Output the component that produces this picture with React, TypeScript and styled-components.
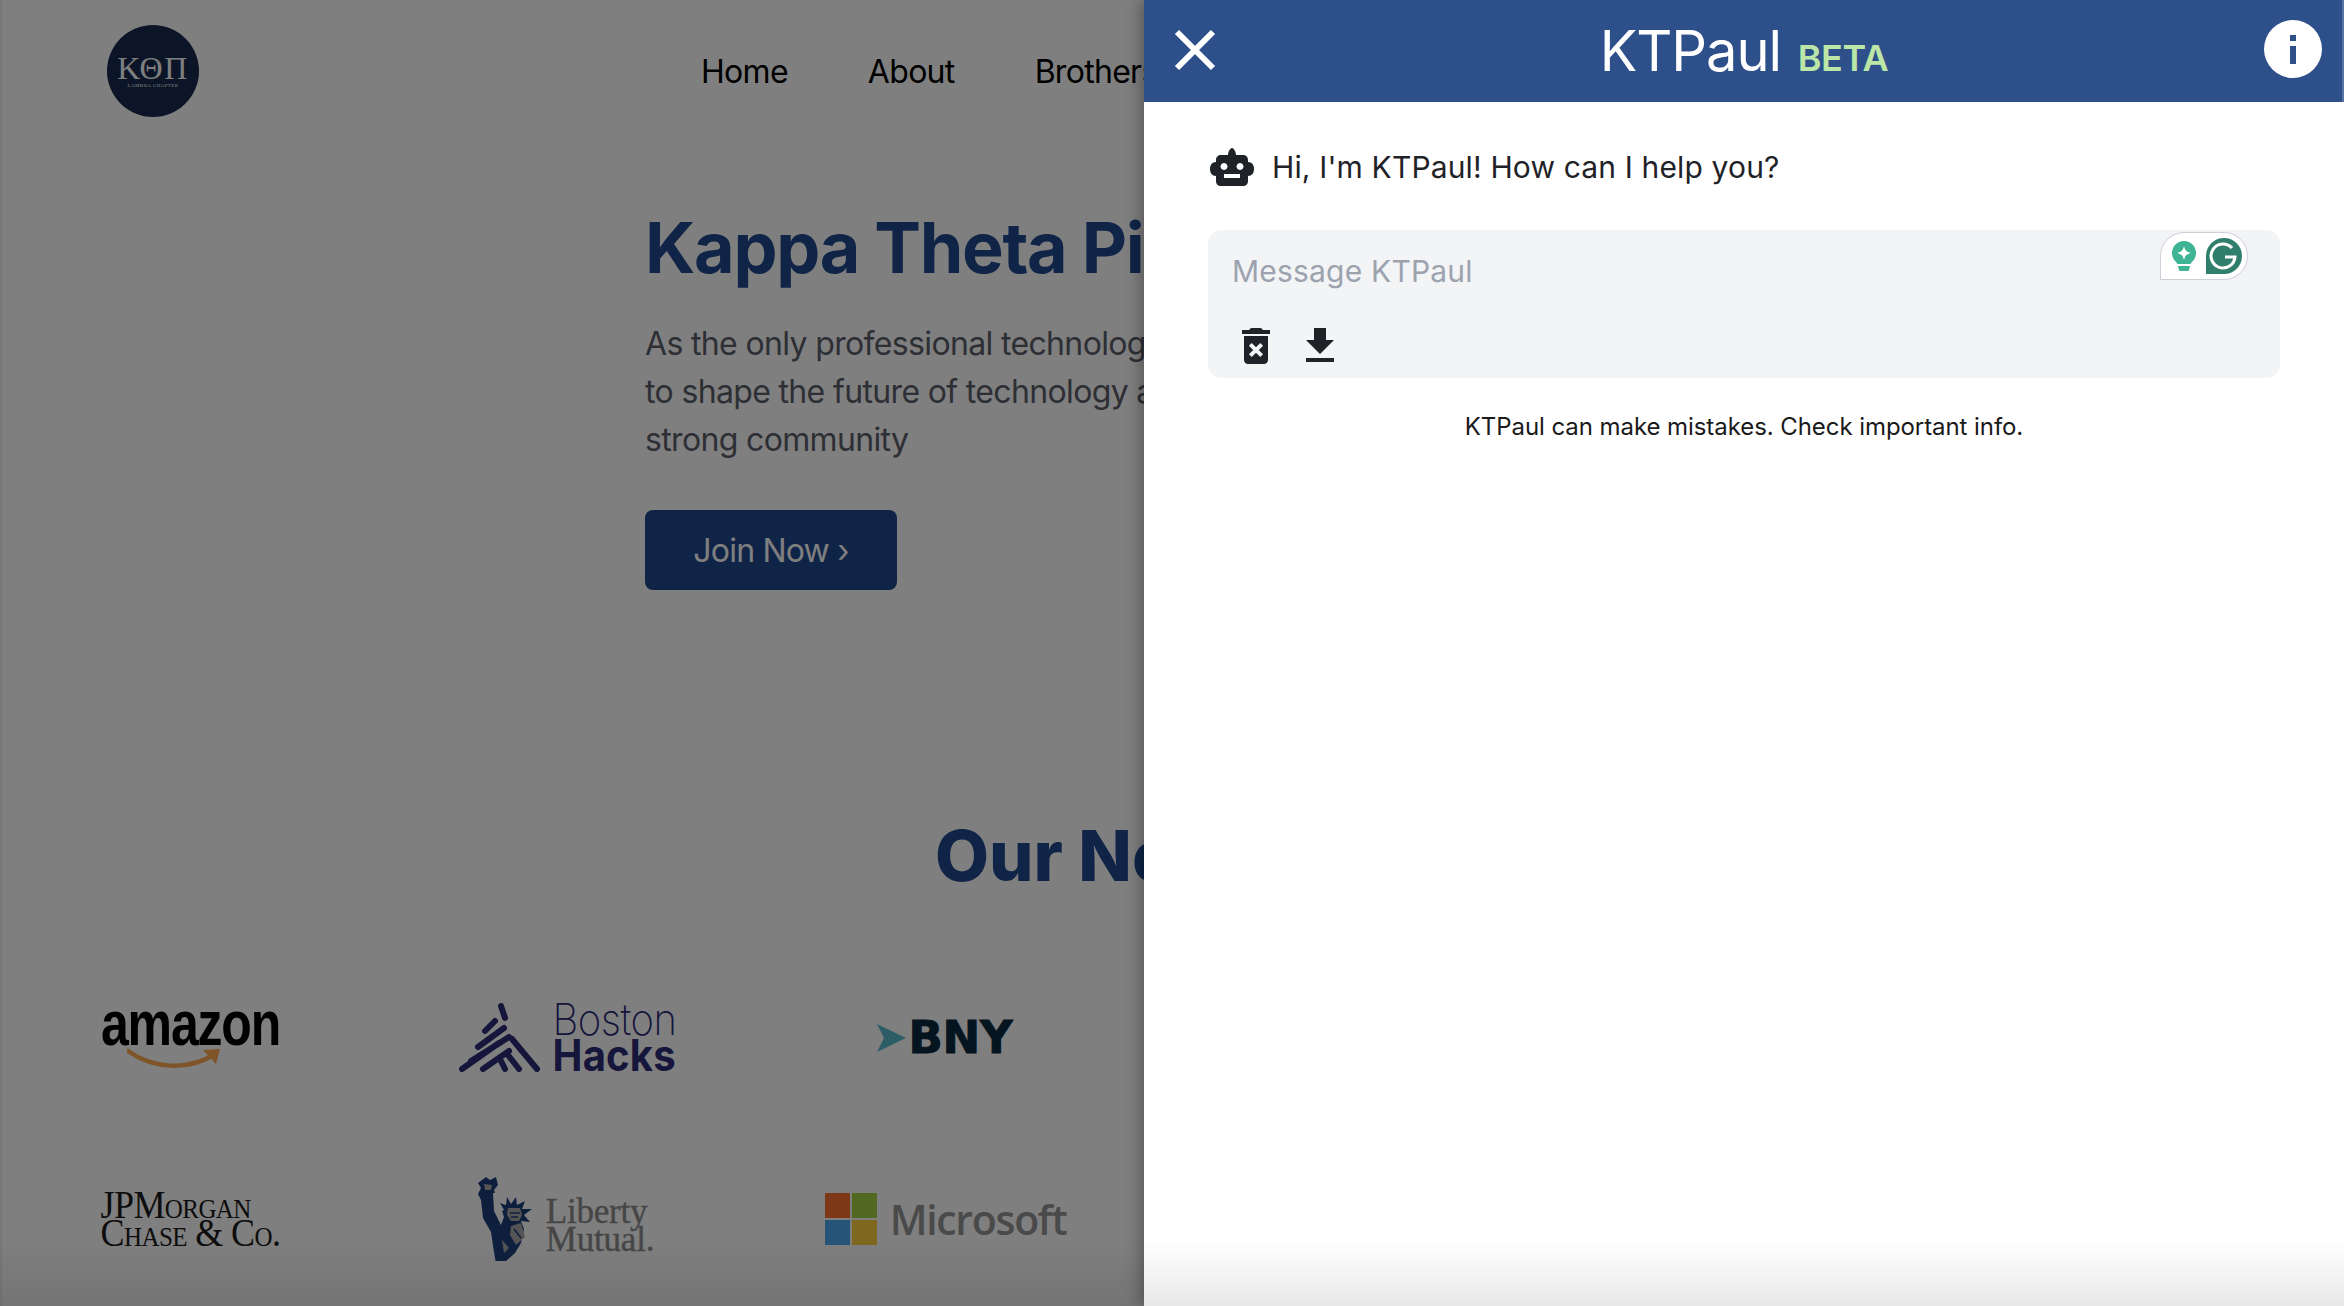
import React from "react";
import styled, { createGlobalStyle } from "styled-components";
import { MdDeleteForever, MdFileDownload } from "react-icons/md";

const Global = createGlobalStyle`
  html, body { margin: 0; padding: 0; height: 100%; overflow: hidden; background: #fff; }
  body { font-family: Inter, "Liberation Sans", sans-serif; }
  * { box-sizing: border-box; }
`;

const Screen = styled.div`
  position: relative;
  width: 2344px;
  height: 1306px;
  overflow: hidden;
  background: #fff;
`;

/* ---------- page behind the drawer ---------- */
const Page = styled.main`
  width: 2344px;
  height: 1306px;
  white-space: nowrap;
  border-left: 2px solid #f0f0f0;
`;

const Nav = styled.nav`
  display: flex;
  align-items: center;
  height: 142px;
  padding-left: 105px;
  gap: 80px;
`;

const Badge = styled.div`
  width: 92px;
  height: 92px;
  margin-right: 422px;
  border-radius: 50%;
  background: #172b4e;
  color: #fff;
  display: flex;
  flex-direction: column;
  align-items: center;
  justify-content: center;
  font-family: "Liberation Serif", serif;
`;

const BadgeLetters = styled.div`
  font-size: 32px;
  line-height: 28px;
  letter-spacing: 1.5px;
`;

const BadgeSub = styled.div`
  font-size: 5px;
  line-height: 7px;
  letter-spacing: 0.4px;
`;

const NavLink = styled.a`
  font-size: 32px;
  letter-spacing: -0.7px;
  color: #000;
`;

const Hero = styled.section`
  padding: 62px 0 0 643px;
`;

const HeroTitle = styled.h1`
  margin: 0;
  font-size: 70px;
  line-height: 88px;
  font-weight: 700;
  letter-spacing: -1.3px;
  color: #1f498f;
`;

const HeroText = styled.p`
  margin: 28px 0 0;
  font-size: 32px;
  line-height: 48px;
  letter-spacing: -0.65px;
  color: #5b5e6b;
`;

const JoinButton = styled.button`
  display: block;
  margin-top: 46px;
  width: 252px;
  height: 80px;
  border: 0;
  border-radius: 8px;
  background: #1f498f;
  color: #fff;
  font: 400 32px Inter, sans-serif;
  letter-spacing: -0.8px;
`;

const NetworkTitle = styled.h2`
  margin: 222px 0 0 933px;
  font-size: 70px;
  line-height: 88px;
  font-weight: 800;
  color: #1f498f;
`;

const LogoGrid = styled.div`
  display: grid;
  grid-template-columns: repeat(3, 377px);
  grid-auto-rows: 181px;
  margin: 47px 0 0 0;
`;

const LogoCell = styled.div`
  display: flex;
  align-items: center;
  justify-content: center;
`;

const LogoStack = styled.div`
  display: flex;
  flex-direction: column;
  align-items: flex-start;
`;

const AmazonWord = styled.div`
  font: 700 50px/40px "Liberation Sans", sans-serif;
  letter-spacing: -1.2px;
  color: #000;
  transform: scaleY(1.25);
`;

const Swoosh = styled.svg`
  display: block;
  margin: 3px 0 0 26px;
`;

const BostonRow = styled.div`
  display: flex;
  align-items: center;
  gap: 12px;
`;

const BostonWord = styled.div<{ $bold?: boolean }>`
  font-family: Inter, sans-serif;
  font-size: 40px;
  line-height: 36px;
  font-weight: ${(p) => (p.$bold ? 700 : 200)};
  letter-spacing: ${(p) => (p.$bold ? "0.2px" : "-0.5px")};
  color: #2c2c78;
  transform: scaleY(1.08);
`;

const BnyRow = styled.div`
  display: flex;
  align-items: center;
  gap: 2px;
`;

const BnyWord = styled.div`
  font: 700 45px/42px "DejaVu Sans", sans-serif;
  letter-spacing: -0.2px;
  -webkit-text-stroke: 1px #0a2a40;
  color: #0a2a40;
`;

const ChaseWord = styled.div`
  font: 400 36px/28px "Liberation Serif", serif;
  font-variant: small-caps;
  letter-spacing: -0.6px;
  color: #1b1b1b;
  transform: scaleY(1.12);
`;

const LibertyRow = styled.div`
  display: flex;
  align-items: flex-end;
  gap: 4px;
  margin-left: -3px;
`;

const LibertyWord = styled.div`
  font: 400 35px/28px "Liberation Serif", serif;
  -webkit-text-stroke: 0.4px #8c8c8c;
  letter-spacing: -0.2px;
  color: #8c8c8c;
`;

const LibertyText = styled(LogoStack)`
  padding-bottom: 7px;
`;

const MicrosoftRow = styled.div`
  display: flex;
  align-items: center;
  gap: 13px;
  margin-left: 2px;
`;

const MsWord = styled.div`
  font: 600 41px/52px "Open Sans", sans-serif;
  letter-spacing: -1.3px;
  color: #949494;
`;

const Scrim = styled.div`
  position: absolute;
  inset: 0;
  background: rgba(0, 0, 0, 0.5);
`;

/* ---------- chat drawer ---------- */
const Drawer = styled.aside`
  position: absolute;
  top: 0;
  right: 0;
  bottom: 0;
  width: 1200px;
  background: #fff;
  box-shadow: -4px 0 14px rgba(0, 0, 0, 0.3);
`;

const Header = styled.header`
  display: grid;
  grid-template-columns: 1fr auto 1fr;
  align-items: center;
  height: 102px;
  padding: 0 20px 0 30px;
  background: #2d4f8a;
  border-right: 2px solid #5873a3;
`;

const CloseButton = styled.button`
  justify-self: start;
  padding: 0;
  border: 0;
  background: none;
  display: flex;
  margin-top: -2px;
`;

const TitleGroup = styled.div`
  display: flex;
  align-items: baseline;
  gap: 17px;
  margin-right: 8px;
`;

const Title = styled.span`
  font-size: 56px;
  letter-spacing: -1.1px;
  color: #fff;
`;

const Beta = styled.span`
  font-size: 36px;
  font-weight: 600;
  letter-spacing: -0.5px;
  color: #bbe6a8;
`;

const InfoButton = styled.div`
  justify-self: end;
  width: 58px;
  height: 58px;
  border-radius: 50%;
  background: #fff;
  color: #2d4f8a;
  display: flex;
  flex-direction: column;
  align-items: center;
  justify-content: center;
  gap: 5px;
  margin-top: -4px;
`;

const InfoDot = styled.span`
  width: 6px;
  height: 6px;
  background: currentColor;
`;

const InfoStem = styled.span`
  width: 6px;
  height: 18px;
  background: currentColor;
`;

const Body = styled.div`
  padding: 45px 64px 0;
`;

const Greeting = styled.div`
  display: flex;
  align-items: center;
  gap: 18px;
  height: 40px;
  padding-left: 2px;
  font-size: 30px;
  letter-spacing: 0.15px;
  color: #1f2328;
`;

const InputBox = styled.div`
  position: relative;
  margin-top: 43px;
  height: 148px;
  padding: 21px 24px 8px;
  border-radius: 14px;
  background: #f3f4f6;
  display: flex;
  flex-direction: column;
  justify-content: space-between;
`;

const MessageInput = styled.input`
  display: block;
  width: 100%;
  height: 40px;
  padding: 0;
  border: 0;
  outline: 0;
  background: none;
  font: 400 30px Inter, sans-serif;
  letter-spacing: 0.2px;
  &::placeholder { color: #9ca3af; opacity: 1; }
`;

const Tools = styled.div`
  display: flex;
  gap: 16px;
  color: #1f2328;
  font-size: 48px;
  line-height: 0;
`;

const Grammarly = styled.div`
  position: absolute;
  top: 2px;
  right: 32px;
  width: 88px;
  height: 48px;
  display: flex;
  align-items: center;
  justify-content: space-between;
  padding: 0 5px 0 11px;
  background: #fff;
  border: 1.5px solid #ccd0d8;
  border-radius: 24px 24px 24px 0;
`;

const Disclaimer = styled.p`
  margin: 34px 0 0;
  text-align: center;
  font-size: 24px;
  line-height: 30px;
  letter-spacing: -0.07px;
  color: #1a1a1a;
`;

const BottomFade = styled.div`
  position: absolute;
  left: 0;
  right: 0;
  bottom: 0;
  height: 66px;
  background: linear-gradient(to bottom, rgba(0, 0, 0, 0), rgba(0, 0, 0, 0.09));
`;

const App = () => (
  <Screen>
    <Global />
    <Page>
      <Nav>
        <Badge>
          <BadgeLetters>ΚΘΠ</BadgeLetters>
          <BadgeSub>LAMBDA CHAPTER</BadgeSub>
        </Badge>
        <NavLink>Home</NavLink>
        <NavLink>About</NavLink>
        <NavLink>Brothers</NavLink>
      </Nav>
      <Hero>
        <HeroTitle>Kappa Theta Pi</HeroTitle>
        <HeroText>
          As the only professional technology
          <br />
          to shape the future of technology and
          <br />
          strong community
        </HeroText>
        <JoinButton>Join Now ›</JoinButton>
      </Hero>
      <NetworkTitle>Our Network</NetworkTitle>
      <LogoGrid>
        <LogoCell>
          <LogoStack>
            <AmazonWord>amazon</AmazonWord>
            <Swoosh width="96" height="24" viewBox="0 0 96 24">
              <path d="M1 4C26 22 62 24 88 7" fill="none" stroke="#ffa850" strokeWidth="4.500" strokeLinecap="round" />
              <path d="M76 3l17-1-4 15z" fill="#ffa850" />
            </Swoosh>
          </LogoStack>
        </LogoCell>
        <LogoCell>
          <BostonRow>
            <svg width="82" height="69" viewBox="0 0 82 69" fill="none" stroke="#2c2c78" strokeWidth="6" strokeLinecap="round">
              <path d="M42 3l4 12M36 18L26 28M45 25L19 44M50 34L12 58M3 66L40 40M24 66L50 48M53 36l25 30M49 52l11 14M42 58l4 8" />
            </svg>
            <LogoStack>
              <BostonWord>Boston</BostonWord>
              <BostonWord $bold>Hacks</BostonWord>
            </LogoStack>
          </BostonRow>
        </LogoCell>
        <LogoCell>
          <BnyRow>
            <svg width="30" height="30" viewBox="0 0 30 30">
              <path d="M0 1l29 14L0 29l7-14z" fill="#5bbcd0" />
            </svg>
            <BnyWord>BNY</BnyWord>
          </BnyRow>
        </LogoCell>
        <LogoCell>
          <LogoStack>
            <ChaseWord>JPMorgan</ChaseWord>
            <ChaseWord>Chase &amp; Co.</ChaseWord>
          </LogoStack>
        </LogoCell>
        <LogoCell>
          <LibertyRow>
            <svg width="64" height="85" viewBox="0 0 64 85">
              <path fill="#1d3f7d" d="M8 1l4 3 6-3 2 8-4 5 1 3h-2l1 18 7 14 3-8-2-6 2-1-4-7 6 2 1-8 4 7 5-7 1 8 8-4-3 8h10l-8 6 6 7-9-1 3 8-3 14-6 10-10 9-8 8-3-18-3-20-8-14-2-18-3-6 3-6-3-5z" />
              <path fill="#a9a9a9" d="M30 32h12l2 7-3 6h-8l-4-6zM33 50l10-3 4 14-9 8-6-10zM6 8l8 1-1 5H7zM24 64l7 8-5 5z" />
              <path fill="none" stroke="#1d3f7d" strokeWidth="1.500" d="M32 37h10M33 41h7M36 53l7 9" />
            </svg>
            <LibertyText>
              <LibertyWord>Liberty</LibertyWord>
              <LibertyWord>Mutual.</LibertyWord>
            </LibertyText>
          </LibertyRow>
        </LogoCell>
        <LogoCell>
          <MicrosoftRow>
            <svg width="52" height="52" viewBox="0 0 52 52">
              <rect width="25" height="25" fill="#f8702f" />
              <rect x="27" width="25" height="25" fill="#a0d040" />
              <rect y="27" width="25" height="25" fill="#4aa8f0" />
              <rect x="27" y="27" width="25" height="25" fill="#ffcf40" />
            </svg>
            <MsWord>Microsoft</MsWord>
          </MicrosoftRow>
        </LogoCell>
      </LogoGrid>
    </Page>
    <Scrim />
    <Drawer>
      <Header>
        <CloseButton aria-label="Close">
          <svg width="42" height="42" viewBox="0 0 42 42" stroke="#fff" strokeWidth="6">
            <path d="M3 3l36 36M39 3L3 39" />
          </svg>
        </CloseButton>
        <TitleGroup>
          <Title>KTPaul</Title>
          <Beta>BETA</Beta>
        </TitleGroup>
        <InfoButton aria-label="Info">
          <InfoDot />
          <InfoStem />
        </InfoButton>
      </Header>
      <Body>
        <Greeting>
          <svg width="44" height="38" viewBox="0 0 44 38">
            <path fill="#1f2328" fillRule="evenodd" d="M18 7c0-3 2-7 4-7s4 4 4 7h7c3 0 5 2 5 5v2c4 0 6 3 6 7s-2 7-6 7v5c0 3-2 5-5 5H11c-3 0-5-2-5-5v-5c-4 0-6-3-6-7s2-7 6-7v-2c0-3 2-5 5-5z M14 15a3.500 3.500 0 1 0 0.010 0z M30 15a3.500 3.500 0 1 0 0.010 0z M14 26v4h16v-4z" />
          </svg>
          Hi, I'm KTPaul! How can I help you?
        </Greeting>
        <InputBox>
          <MessageInput placeholder="Message KTPaul" />
          <Tools>
            <MdDeleteForever />
            <MdFileDownload />
          </Tools>
          <Grammarly>
            <svg width="24" height="30" viewBox="0 0 24 30">
              <path fill="#3fb494" d="M12 0a12 12 0 0 1 12 12c0 4-2 7-4 9-1 1-1 2-2 2H6c-1 0-1-1-2-2-2-2-4-5-4-9A12 12 0 0 1 12 0z" />
              <path fill="#fff" d="M12 5c.8 4 2.600 6 7 7-4.400 1-6.200 3-7 7-.8-4-2.600-6-7-7 4.400-1 6.200-3 7-7z" />
              <path fill="#3fb494" d="M6 25h12l-1 4a1 1 0 0 1-1 1H8a1 1 0 0 1-1-1z" />
            </svg>
            <svg width="36" height="36" viewBox="0 0 36 36">
              <path fill="#2f7f6c" d="M18 0a18 18 0 0 1 0 36H0V18A18 18 0 0 1 18 0z" />
              <path fill="none" stroke="#fff" strokeWidth="3" d="M26 10a12 12 0 1 0 3 9H19" />
            </svg>
          </Grammarly>
        </InputBox>
        <Disclaimer>KTPaul can make mistakes. Check important info.</Disclaimer>
      </Body>
    </Drawer>
    <BottomFade />
  </Screen>
);

export default App;
